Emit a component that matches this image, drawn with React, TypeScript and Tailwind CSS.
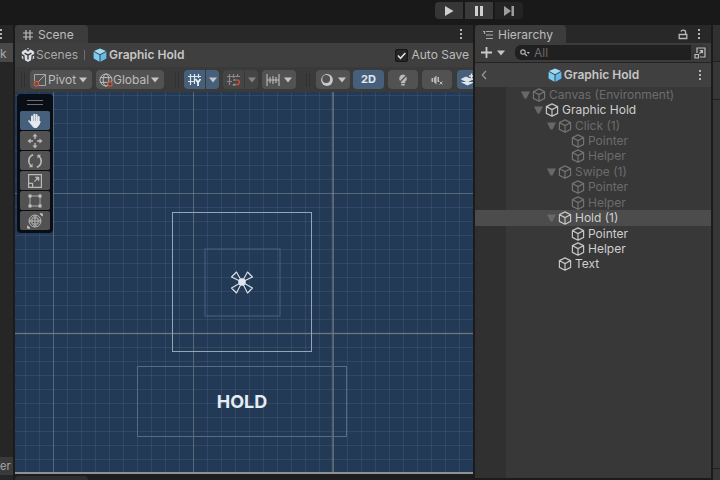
import { useState } from "react"
import type { ReactNode } from "react"

type TreeItem = { name: string; depth: number; open?: boolean; dim?: boolean }

const TREE: TreeItem[] = [
  { name: "Canvas (Environment)", depth: 0, open: true, dim: true },
  { name: "Graphic Hold", depth: 1, open: true },
  { name: "Click (1)", depth: 2, open: true, dim: true },
  { name: "Pointer", depth: 3, dim: true },
  { name: "Helper", depth: 3, dim: true },
  { name: "Swipe (1)", depth: 2, open: true, dim: true },
  { name: "Pointer", depth: 3, dim: true },
  { name: "Helper", depth: 3, dim: true },
  { name: "Hold (1)", depth: 2, open: true },
  { name: "Pointer", depth: 3 },
  { name: "Helper", depth: 3 },
  { name: "Text", depth: 2 },
]

const INDENT = ["pl-[45px]", "pl-[58px]", "pl-[71px]", "pl-[84px]"]

const TOOLS: { name: string; icon: ReactNode }[] = [
  {
    name: "View",
    icon: (
      <g stroke="#e6eaee" strokeLinecap="round" fill="none">
        <path d="M5 9.5V3.4M7.3 8V1.6M9.6 8V2M11.7 9V4" strokeWidth="1.9" />
        <path d="M2 8l3.2 3.4M12.8 9l-1.6 2.4" strokeWidth="1.7" />
        <path d="M4.4 8.4h7.8v2.8L10 14.4H6.8l-2.4-3z" fill="#e6eaee" strokeWidth="1" />
      </g>
    ),
  },
  {
    name: "Move",
    icon: (
      <g fill="#b9b9b9">
        <path d="M8 .4l2.6 3.2H5.4zM8 15.6l2.6-3.2H5.4zM.4 8l3.2-2.6v5.2zM15.6 8l-3.2-2.6v5.2z" />
        <path d="M7.3 3h1.4v3H7.3zM7.3 10h1.4v3H7.3zM3 7.3h3v1.4H3zM10 7.3h3v1.4h-3z" />
      </g>
    ),
  },
  {
    name: "Rotate",
    icon: (
      <g fill="none" stroke="#b9b9b9" strokeWidth="1.5">
        <path d="M6.2 1.8C1.4 3.4.2 9 4 13M9.8 14.2c4.8-1.6 6-7.200 2.200-11.200" />
        <path d="M1.800 14.200h3.800v-3.800zM14.200 1.800h-3.800v3.800z" fill="#b9b9b9" stroke="none" />
      </g>
    ),
  },
  {
    name: "Scale",
    icon: (
      <g fill="none" stroke="#b9b9b9" strokeWidth="1.2">
        <path d="M1.600 1.600h12.800v12.800H1.600zM1.600 10.400h4v4M7.400 8.600l3.600-3.600" />
        <path d="M8.200 4h3.800v3.800z" fill="#b9b9b9" strokeWidth=".6" />
      </g>
    ),
  },
  {
    name: "Rect",
    icon: (
      <g fill="#c4c4c4">
        <path d="M3 3h10v10H3z" fill="none" stroke="#a8a8a8" />
        <path d="M1.500 1.500h3v3h-3zM11.500 1.500h3v3h-3zM1.500 11.500h3v3h-3zM11.500 11.500h3v3h-3z" />
      </g>
    ),
  },
  {
    name: "Transform",
    icon: (
      <g fill="none" stroke="#b9b9b9">
        <circle cx="8" cy="8" r="6" />
        <path d="M8 3v10M3 8h10M5 5h6v6H5zM6.500 3.800L8 2.300l1.500 1.500M6.500 12.200L8 13.700l1.500-1.500M3.800 6.500L2.300 8l1.500 1.500M12.200 6.500L13.700 8l-1.500 1.500" />
        <path d="M13 .8h2.400v2.400zM3 15.200H.6v-2.400z" fill="#c4c4c4" />
      </g>
    ),
  },
]

function Cube({ color, filled }: { color: string; filled?: boolean }) {
  return (
    <svg viewBox="0 0 14 14" className="h-3.5 w-3.5 shrink-0" aria-hidden="true">
      {filled ? (
        <>
          <path d="M7 .4l6 2.6L7 6.2 1 3z" fill="#9fdcf8" />
          <path d="M.6 3.8L6.5 7v6.7L.6 10.4z" fill="#7ccdf3" />
          <path d="M13.4 3.8L7.5 7v6.7l5.9-3.3z" fill="#62bbe8" />
        </>
      ) : (
        <path
          d="M7 .9l5.600 2.700v6.800L7 13.200l-5.600-2.800V3.600zM1.600 3.800L7 6.600l5.400-2.800M7 6.600v6.300"
          fill="none"
          stroke={color}
          strokeWidth="1.2"
          strokeLinejoin="round"
        />
      )}
    </svg>
  )
}

function Caret({ color = "#c4c4c4" }: { color?: string }) {
  return (
    <svg viewBox="0 0 8 6" className="h-[6px] w-2 shrink-0" aria-hidden="true">
      <path d="M0 .5h8L4 5.5z" fill={color} />
    </svg>
  )
}

function Kebab({ label }: { label: string }) {
  return (
    <button aria-label={label} className="flex h-4 w-3 shrink-0 items-center justify-center">
      <svg viewBox="0 0 4 12" className="h-3 w-1">
        <path d="M1 1h2v2H1zM1 5h2v2H1zM1 9h2v2H1z" fill="#b4b4b4" />
      </svg>
    </button>
  )
}

function Grip() {
  return (
    <svg viewBox="0 0 4 14" className="h-3.5 w-1 shrink-0" aria-hidden="true">
      <path d="M.5 0v14M3.5 0v14" stroke="#303030" />
    </svg>
  )
}

function PlayControls() {
  return (
    <header className="flex h-[25px] items-start gap-[2px] bg-[#191919] pl-[435px] pt-[2px]">
      <button aria-label="Play" className="flex h-[17px] w-7 items-center justify-center rounded-l-sm bg-[#363636]">
        <svg viewBox="0 0 10 10" className="h-[10px] w-[10px]"><path d="M1 0l8.500 5L1 10z" fill="#cfcfcf" /></svg>
      </button>
      <button aria-label="Pause" className="flex h-[17px] w-7 items-center justify-center bg-[#3a3a3a]">
        <svg viewBox="0 0 10 10" className="h-[10px] w-[10px]"><path d="M1 0h3v10H1zM6 0h3v10H6z" fill="#cfcfcf" /></svg>
      </button>
      <button aria-label="Step" className="flex h-[17px] w-7 items-center justify-center rounded-r-sm bg-[#242424]">
        <svg viewBox="0 0 10 10" className="h-[10px] w-[10px]"><path d="M0 0l7 5-7 5zM7.500 0H10v10H7.500z" fill="#9d9d9d" /></svg>
      </button>
    </header>
  )
}

function SceneToolbar() {
  return (
    <div className="flex h-[25px] items-center overflow-hidden bg-[#3a3a3a] pl-[6px]">
      <Grip />
      <button className="ml-[5px] flex h-[19px] w-[62px] shrink-0 items-center gap-px rounded-sm bg-[#525252] pl-[3px]">
        <svg viewBox="0 0 14 14" className="h-3.5 w-3.5 shrink-0" aria-hidden="true">
          <path d="M1.500 8V1.500h11v11H6M5 9l7.500-7.500" fill="none" stroke="#a8a8a8" />
          <circle cx="3.400" cy="10.800" r="2.200" fill="none" stroke="#c2573f" strokeWidth="1.500" />
        </svg>
        Pivot
        <span className="ml-auto mr-[5px] flex"><Caret /></span>
      </button>
      <button className="ml-1 flex h-[19px] w-[68px] shrink-0 items-center rounded-sm bg-[#525252] pl-[3px]">
        <svg viewBox="0 0 14 14" className="h-3.5 w-3.5 shrink-0" aria-hidden="true">
          <g fill="none" stroke="#bdbdbd">
            <circle cx="7" cy="7" r="6" />
            <ellipse cx="7" cy="7" rx="2.800" ry="6" />
            <path d="M1.600 4.600h10.800M1.600 9.400h10.800" />
          </g>
          <circle cx="11" cy="11" r="2.100" fill="#5a4038" stroke="#c2573f" strokeWidth="1.400" />
        </svg>
        Global
        <span className="ml-auto mr-[5px] flex"><Caret /></span>
      </button>
      <span className="ml-[11px] flex"><Grip /></span>
      <button aria-label="Grid axis" className="ml-[5px] flex h-[19px] w-[21px] shrink-0 items-center justify-center rounded-l-sm bg-[#46607c]">
        <svg viewBox="0 0 15 14" className="h-3.5 w-[15px]">
          <path d="M3.500 1v11M7.500 1v10M11.500 1v4M1 3.500h13M1 8.500h6" stroke="#e0e6ec" strokeWidth="1.200" />
          <path d="M8.500 6l2.500 3.500V13M13.500 6L11 9.500" fill="none" stroke="#f2f5f8" strokeWidth="1.700" />
        </svg>
      </button>
      <button aria-label="Grid options" className="ml-px flex h-[19px] w-[13px] shrink-0 items-center justify-center rounded-r-sm bg-[#46607c]"><Caret /></button>
      <button aria-label="Grid snapping" className="ml-1 flex h-[19px] w-[21px] shrink-0 items-center justify-center rounded-l-sm bg-[#454545]">
        <svg viewBox="0 0 15 14" className="h-3.5 w-[15px]">
          <path d="M3.500 1v11M7.500 1v4M7.500 11v2M11.500 1v3M1 3.500h13M1 8.500h5" stroke="#8a8a8a" strokeWidth="1.200" />
          <path d="M9.500 7H11a2.300 2.300 0 010 4.600H9.500" fill="none" stroke="#b0523e" strokeWidth="1.700" />
          <path d="M7.500 7h2M7.500 11.600h2" stroke="#9a9a9a" strokeWidth="1.700" />
        </svg>
      </button>
      <button aria-label="Snapping options" className="ml-px flex h-[19px] w-[13px] shrink-0 items-center justify-center rounded-r-sm bg-[#454545]"><Caret color="#858585" /></button>
      <button aria-label="Increment snapping" className="ml-1 flex h-[19px] w-[34px] shrink-0 items-center justify-center gap-1 rounded-sm bg-[#525252]">
        <svg viewBox="0 0 14 14" className="h-3.5 w-3.5">
          <path d="M1 1v12M13 1v12M4 4v6M7 3v8M10 4v6M1 7h12" stroke="#bdbdbd" strokeWidth="1.100" />
        </svg>
        <Caret />
      </button>
      <span className="ml-[10px] flex"><Grip /></span>
      <button aria-label="Draw mode" className="ml-[6px] flex h-[19px] w-[34px] shrink-0 items-center justify-center gap-1 rounded-sm bg-[#525252]">
        <svg viewBox="0 0 14 14" className="h-3.5 w-3.5">
          <circle cx="7" cy="7" r="5.900" fill="#c8c8c8" />
          <circle cx="6.200" cy="6" r="3.900" fill="#525252" />
        </svg>
        <Caret />
      </button>
      <button className="ml-[3px] h-[19px] w-[31px] shrink-0 rounded-sm bg-[#46607c] text-[11px] font-bold leading-none text-[#e2e8ee]">2D</button>
      <button aria-label="Scene lighting" className="ml-1 flex h-[19px] w-[30px] shrink-0 items-center justify-center rounded-sm bg-[#525252]">
        <svg viewBox="0 0 12 14" className="h-3.5 w-3">
          <path d="M6 1.400a4 4 0 012.200 7.200V10H3.800V8.600A4 4 0 016 1.400zM4.200 10.800h3.600v1.800H4.200z" fill="#b9b9b9" />
          <path d="M2 10l8.500-8.500" stroke="#525252" strokeWidth="1.300" />
        </svg>
      </button>
      <button aria-label="Scene audio" className="ml-1 flex h-[19px] w-[30px] shrink-0 items-center justify-center rounded-sm bg-[#525252]">
        <svg viewBox="0 0 12 12" className="h-3 w-3">
          <path d="M.5 4H2v4H.5zM2.800 4l2.700-2.500v9L2.800 8zM6.500 3H8v5H6.500z" fill="#b9b9b9" />
          <path d="M8.500 7.500l3 3M11.500 7.500l-3 3" stroke="#b9b9b9" />
        </svg>
      </button>
      <button aria-label="Effects" className="ml-[5px] flex h-[19px] w-[30px] shrink-0 items-center rounded-sm bg-[#46607c] pl-1">
        <svg viewBox="0 0 14 14" className="h-3.5 w-3.5 shrink-0">
          <path d="M.5 6.200L5 4l3 1.500 4 .5-5.800 3zM.5 9l5.800 3L13 9" fill="#dfe6ec" stroke="#dfe6ec" strokeLinejoin="round" />
          <path d="M10.500 .5v5M8 3h5" stroke="#dfe6ec" strokeWidth="1.300" />
        </svg>
      </button>
    </div>
  )
}

function SceneCanvas() {
  const [tool, setTool] = useState("View")
  return (
    <div className="relative min-h-[382px] flex-1 overflow-hidden border-b-2 border-[#8d9297] bg-[#223a55]">
      <svg className="absolute inset-0 h-full w-full" aria-hidden="true">
        <defs>
          <pattern id="minor" x="10" y="3" width="14" height="14" patternUnits="userSpaceOnUse">
            <path d="M.5 0v14M0 .5h14" stroke="#8fa0bd" strokeOpacity=".13" />
          </pattern>
          <pattern id="major" x="38" y="101" width="140" height="140" patternUnits="userSpaceOnUse">
            <path d="M.5 0v140M0 .5h140" stroke="#7f8791" strokeOpacity=".5" />
          </pattern>
        </defs>
        <rect width="100%" height="100%" fill="url(#minor)" />
        <rect width="100%" height="100%" fill="url(#major)" />
        <path d="M317.500 0v600M0 241.500h2000" stroke="#858381" strokeWidth="1.500" strokeOpacity=".5" />
        <rect x="157.500" y="120.500" width="139" height="139" fill="none" stroke="#93a6b8" />
        <rect x="190" y="157" width="75" height="67" fill="none" stroke="#435c77" strokeWidth="1.200" />
        <rect x="122.500" y="274.500" width="209" height="70" fill="none" stroke="#566c84" />
        <g fill="none" stroke="#dce3ea" strokeWidth="1.100" strokeLinejoin="round">
          <path d="M227 190l-5.500-10-5 5zM227 190l5.500-10 5 5zM227 190l-5.500 11-5-5zM227 190l5.500 11 5-5z" />
          <circle cx="227" cy="190" r="3.800" fill="#dfe6ed" stroke="none" />
        </g>
      </svg>

      {/* label centred on the text rect */}
      <div className="absolute left-[122px] top-[275px] flex h-[70px] w-[210px] items-center justify-center text-lg font-bold text-[#e6ecf3]">
        HOLD
      </div>

      {/* floating tool palette */}
      <div className="absolute left-[2px] top-[2px] flex w-9 flex-col rounded bg-[#090d16] px-[3px] pb-[3px]">
        <div className="flex h-[17px] items-center justify-center">
          <svg viewBox="0 0 16 5" className="h-[5px] w-4"><path d="M0 .5h16M0 4.500h16" stroke="#6b6f74" /></svg>
        </div>
        <div className="flex flex-col gap-px">
          {TOOLS.map((t) => (
            <button
              key={t.name}
              aria-label={t.name}
              onClick={() => setTool(t.name)}
              className={`flex h-[19px] items-center justify-center rounded-xs ${tool === t.name ? "bg-[#46607c]" : "bg-[#525252]"}`}
            >
              <svg viewBox="0 0 16 16" className="h-4 w-4">{t.icon}</svg>
            </button>
          ))}
        </div>
      </div>
    </div>
  )
}

function ScenePanel() {
  const [autoSave, setAutoSave] = useState(true)
  return (
    <section className="flex min-w-0 flex-1 flex-col">
      <div className="flex h-[18px] items-center justify-between bg-[#282828] pr-[6px]">
        <h2 className="flex h-full w-[73px] items-center gap-[5px] rounded-t bg-[#3c3c3c] pl-2 pt-[2px]">
          <svg viewBox="0 0 10 10" className="h-[10px] w-[10px]" aria-hidden="true">
            <path d="M3 0v10M7 0v10M0 3h10M0 7h10" stroke="#bcbcbc" strokeWidth="1.200" />
          </svg>
          Scene
        </h2>
        <Kebab label="Scene menu" />
      </div>
      <div className="flex h-[24px] items-center bg-[#3f3f3f] pl-[6px] pr-1">
        <svg viewBox="0 0 14 14" className="h-3.5 w-3.5 shrink-0" aria-hidden="true">
          <path d="M7 .6l5.700 3.200v6.400L7 13.400l-5.700-3.200V3.800z" fill="#dfe3e8" stroke="#dfe3e8" strokeLinejoin="round" />
          <path d="M7 7.200v4.300M7 7.200L3.600 5.200M7 7.200l3.400-2M4.600 0L7 2.600 9.400 0M0 6.500l2.800 1.300L3.200 12M14 6.500l-2.800 1.300-.4 4.200" fill="none" stroke="#3f3f3f" strokeWidth="1.400" />
        </svg>
        <a href="#scenes" className="ml-px text-[#a9a9a9]">Scenes</a>
        <span className="ml-[6px] h-[10px] w-px bg-[#707070]" />
        <span className="ml-[8px] flex items-center gap-[2px] font-semibold text-[#c6c6c6]">
          <Cube color="#70c6ef" filled />
          Graphic Hold
        </span>
        <label className="ml-auto flex items-center gap-[3px]">
          <span className="relative flex h-[13px] w-[13px]">
            <input
              type="checkbox"
              checked={autoSave}
              onChange={(e) => setAutoSave(e.target.checked)}
              className="h-[13px] w-[13px] appearance-none rounded-xs border border-[#161616] bg-[#262626]"
            />
            {autoSave && (
              <svg viewBox="0 0 13 13" className="pointer-events-none absolute inset-0">
                <path d="M3 6.500l2.500 2.700L10.300 4" fill="none" stroke="#e0e0e0" strokeWidth="1.600" />
              </svg>
            )}
          </span>
          Auto Save
        </label>
      </div>
      <SceneToolbar />
      <SceneCanvas />
    </section>
  )
}

function HierarchyPanel() {
  const [selected, setSelected] = useState(8)
  return (
    <section className="mb-[2px] flex min-w-0 flex-[236] flex-col">
      <div className="flex h-[18px] items-center bg-[#282828] pr-[6px]">
        <h2 className="flex h-full w-[91px] items-center gap-[5px] rounded-t bg-[#3c3c3c] pl-2 pt-[2px]">
          <svg viewBox="0 0 10 10" className="h-[10px] w-[10px]" aria-hidden="true">
            <path d="M0 1.500h2M3 1.500h7M3 5h7M3 8.500h7M1.500 1v3" stroke="#a9a9a9" strokeWidth="1.200" />
          </svg>
          Hierarchy
        </h2>
        <button aria-label="Lock" className="ml-auto mr-[5px]">
          <svg viewBox="0 0 10 11" className="h-[11px] w-[10px]">
            <path d="M1.200 5.500h7.600v4H1.200zM3 2.600c.4-2 4.600-2.200 4.600.6v2.300" fill="none" stroke="#b9b9b9" strokeWidth="1.300" />
          </svg>
        </button>
        <Kebab label="Hierarchy menu" />
      </div>

      <div className="flex h-[20px] items-center border-b border-[#232323] bg-[#3c3c3c] pl-[6px] pr-[3px]">
        <button aria-label="Create" className="flex shrink-0 items-center gap-[5px]">
          <svg viewBox="0 0 11 11" className="h-[11px] w-[11px]"><path d="M5.500 0v11M0 5.500h11" stroke="#cacaca" strokeWidth="1.800" /></svg>
          <Caret />
        </button>
        <div className="ml-[10px] flex h-[15px] min-w-0 flex-1 items-center rounded-l-md bg-[#202020] pl-[5px]">
          <svg viewBox="0 0 10 8" className="h-2 w-[10px] shrink-0" aria-hidden="true">
            <circle cx="3" cy="3" r="2.200" fill="none" stroke="#b4b4b4" strokeWidth="1.200" />
            <path d="M4.600 4.600L7 7" stroke="#b4b4b4" strokeWidth="1.300" />
            <path d="M6.500 3h3.500L8.300 5z" fill="#b4b4b4" />
          </svg>
          <input aria-label="Search hierarchy" placeholder="All" className="ml-[4px] h-full w-full min-w-0 bg-transparent outline-none placeholder:text-[#6c6c6c]" />
        </div>
        <button aria-label="Open search" className="flex h-[15px] w-[17px] shrink-0 items-center justify-center rounded-r-sm bg-[#363636]">
          <svg viewBox="0 0 12 12" className="h-3 w-3">
            <path d="M3 6V1h8v9H6" fill="none" stroke="#bdbdbd" strokeWidth="1.200" />
            <path d="M1 7.500h3.500V11H1zM5.500 6.500L8.500 3.500M5.800 3.500h2.700v2.700" fill="none" stroke="#bdbdbd" strokeWidth="1.200" />
          </svg>
        </button>
      </div>

      <div className="flex h-6 items-center bg-[#404040] pl-[6px] pr-[5px]">
        <button aria-label="Back" className="w-3 shrink-0">
          <svg viewBox="0 0 6 10" className="h-[10px] w-[6px]"><path d="M5 1L1.300 5 5 9" fill="none" stroke="#999" strokeWidth="1.200" /></svg>
        </button>
        <span className="flex flex-1 items-center justify-center gap-[2px] font-semibold text-[#c6c6c6]">
          <Cube color="#70c6ef" filled />
          Graphic Hold
        </span>
        <Kebab label="Prefab menu" />
      </div>

      <div className="flex-1 bg-linear-to-r from-[#303030] from-[31px] to-[#383838] to-[31px]">
        <ul className="flex h-[185px] flex-col">
          {TREE.map((item, i) => (
            <li key={i} className="min-h-0 flex-1">
              <button
                onClick={() => setSelected(i)}
                className={`flex h-full w-full items-center ${INDENT[item.depth]} ${selected === i ? "bg-[#4c4c4c]" : ""} ${item.dim ? "text-[#6c6c6c]" : "text-[#cfcfcf]"}`}
              >
                <span className="mr-[2px] flex w-[10px] justify-center">
                  {item.open && (
                    <svg viewBox="0 0 9 8" className="h-2 w-[9px]"><path d="M0 .5h9L5.500 7.500h-2z" fill="#686868" /></svg>
                  )}
                </span>
                <Cube color={item.dim ? "#737373" : "#c4c4c4"} />
                <span className="ml-[3px] whitespace-nowrap">{item.name}</span>
              </button>
            </li>
          ))}
        </ul>
      </div>
    </section>
  )
}

export default function App() {
  return (
    <div className="flex min-h-screen flex-col overflow-hidden bg-[#1b1b1b] font-[Inter,sans-serif] text-[12px] leading-[14px] text-[#bcbcbc]">
      <PlayControls />
      <main className="flex flex-1 gap-[2px]">
        {/* neighbouring window cut off on the left */}
        <aside className="flex w-[13px] shrink-0 flex-col overflow-hidden bg-[#262626] pb-[5px]">
          <div className="-ml-[5px] flex h-[18px] items-center"><Kebab label="Panel menu" /></div>
          <div className="h-[19px] bg-[#484848] pt-1 text-[#a9a9a9]">k</div>
          <div className="mt-auto h-[18px] bg-[#3a3a3a] pt-[2px] text-[11px] text-[#a9a9a9]">er</div>
        </aside>
        <div className="flex min-w-0 flex-[458] flex-col">
          <ScenePanel />
          <div className="h-[6px] bg-[#1d1d1d] pt-[2px]">
            <div className="h-1 w-[73px] rounded-t bg-[#2e2e2e]" />
          </div>
        </div>
        <HierarchyPanel />
        <aside className="flex w-[7px] shrink-0 flex-col bg-[#363636]">
          <div className="h-[37px] border-b border-[#202020] bg-[#303030]" />
          <div className="h-[38px] border-b border-[#202020]" />
          <div className="mt-auto h-3 border-t border-[#202020]" />
        </aside>
      </main>
    </div>
  )
}
